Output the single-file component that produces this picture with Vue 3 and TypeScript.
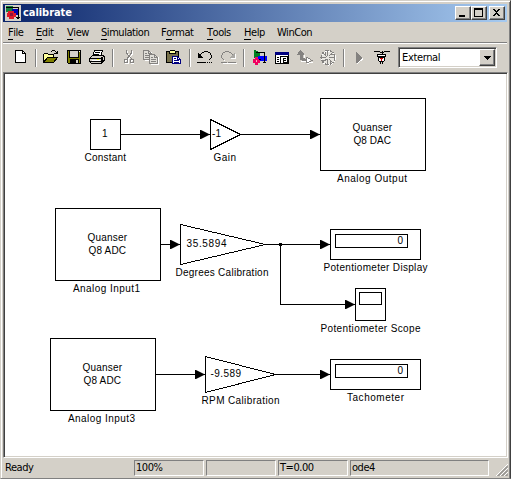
<script setup lang="ts">
interface MenuItem { key: string; rest: string; width: number; pre?: string }
interface Label { text: string; x: number; y: number; w: number }

const menus: MenuItem[] = [
  { key: 'F', rest: 'ile', width: 28 },
  { key: 'E', rest: 'dit', width: 31 },
  { key: 'V', rest: 'iew', width: 34 },
  { key: 'S', rest: 'imulation', width: 60 },
  { pre: 'F', key: 'o', rest: 'rmat', width: 46 },
  { key: 'T', rest: 'ools', width: 37 },
  { key: 'H', rest: 'elp', width: 33 },
  { pre: 'WinCon', key: '', rest: '', width: 40 },
]

const labels: Label[] = [
  { text: 'Constant', x: 84.5, y: 161, w: 41.5 },
  { text: 'Gain', x: 213.5, y: 161, w: 22.5 },
  { text: 'Quanser', x: 352.5, y: 131, w: 39.5 },
  { text: 'Q8 DAC', x: 353.5, y: 144, w: 37.5 },
  { text: 'Analog Output', x: 337, y: 182, w: 70 },
  { text: 'Quanser', x: 87.5, y: 241, w: 39.5 },
  { text: 'Q8 ADC', x: 88.5, y: 254, w: 37.5 },
  { text: 'Analog Input1', x: 73, y: 292, w: 67 },
  { text: '35.5894', x: 186.5, y: 247, w: 40 },
  { text: 'Degrees Calibration', x: 175.5, y: 276, w: 93 },
  { text: 'Potentiometer Display', x: 323.5, y: 271, w: 104 },
  { text: 'Potentiometer Scope', x: 320.5, y: 332, w: 100 },
  { text: 'Quanser', x: 82.5, y: 371, w: 39.5 },
  { text: 'Q8 ADC', x: 83.5, y: 384, w: 37.5 },
  { text: 'Analog Input3', x: 68, y: 422, w: 67 },
  { text: '-9.589', x: 210.5, y: 377, w: 30.5 },
  { text: 'RPM Calibration', x: 201.5, y: 404, w: 78 },
  { text: 'Tachometer', x: 347, y: 401, w: 57 },
]

const blocks = [
  [90, 119, 30, 30], [320, 98, 105, 72], [55, 208, 105, 72], [50, 338, 105, 72],
  [330, 229, 90, 30], [335, 234, 72, 13], [355, 288, 30, 32], [359, 292, 22, 12],
  [330, 359, 90, 30], [335, 364, 72, 13],
]

const wires = ['M120 134H202', 'M240 134H312', 'M160 244H172', 'M265 244H322', 'M280 244V304H347', 'M155 374H197', 'M275 374H322']
const arrows = [[210, 134], [320, 134], [180, 244], [330, 244], [355, 304], [205, 374], [330, 374]]
</script>

<template>
  <div class="window">
    <header class="title">
      <svg class="logo" width="16" height="16" shape-rendering="crispEdges">
        <rect width="16" height="16" fill="#d4d0c8" />
        <path d="M1 1H8V7H1z" fill="#16803c" /><path d="M7 4H14V10H7z" fill="#0000b0" />
        <path d="M3 6H9V8H11V12H9V14H4V12H2V8H3z" fill="#e01828" />
        <path d="M5 8H8V11H5z" fill="#901038" />
        <path d="M1 2.500H13.500V13M11 12.500H15M12 13.500H14" fill="none" stroke="#000" />
      </svg>
      <h1>calibrate</h1>
      <div class="buttons">
        <button aria-label="Minimize"><svg width="14" height="12" shape-rendering="crispEdges"><path d="M3 8H9V10H3z" /></svg></button>
        <button aria-label="Maximize"><svg width="14" height="12" shape-rendering="crispEdges"><path d="M2 1H11V10H2zM3 3V9H10V3z" fill-rule="evenodd" /></svg></button>
        <button class="close" aria-label="Close"><svg width="14" height="12" shape-rendering="crispEdges"><path d="M3 2H5V3H6V4H7V3H8V2H10V3H9V4H8V5H7V6H8V7H9V8H10V9H8V8H7V7H6V8H5V9H3V8H4V7H5V6H6V5H5V4H4V3H3z" /></svg></button>
      </div>
    </header>

    <nav class="menu">
      <span v-for="m in menus" :key="m.key + m.rest" :style="{ width: m.width + 'px' }">{{ m.pre }}<u v-if="m.key">{{ m.key }}</u>{{ m.rest }}</span>
    </nav>

    <div class="toolbar">
      <svg class="icon" viewBox="0 0 18 18">
        <path d="M3.500 1.500H10.500L13.500 4.500V13.500H3.500z" fill="#fff" stroke="#000" /><path d="M10.500 1.500V4.500H13.500" fill="none" stroke="#000" />
      </svg>
      <i class="sep" />
      <svg class="icon" viewBox="0 0 18 18">
        <path d="M1.500 13.500V5.500L3 4.500H5.500L6.500 5.500H11.500V8.500" fill="#ffff9c" stroke="#000" />
        <path d="M1.500 13.500L5.500 8.500H15.500L11.500 13.500z" fill="#808000" stroke="#000" />
        <path d="M9 2.500H10M10 1.500H13M13 2.500H14M14 3.500H15M12 4.500H16M15.500 2V5" fill="none" stroke="#000" />
      </svg>
      <svg class="icon" viewBox="0 0 18 18">
        <path d="M1.500 1.500H14.500V14.500H2.500L1.500 13.500z" fill="#808000" stroke="#000" />
        <path d="M4 2H12V8H4z" fill="#d4d0c8" /><path d="M3.500 2V8.500H12.500V2" fill="none" stroke="#000" />
        <path d="M4 10H13V15H4z" /><path d="M10 11H12V14H10z" fill="#d4d0c8" /><path d="M13 2H14V3H13z" fill="#fff" />
      </svg>
      <svg class="icon" viewBox="0 0 18 18">
        <path d="M6.500 1.500H14.500L12.500 7.500H4.500z" fill="#fff" stroke="#000" /><path d="M7 3.500H12M6 5.500H11" stroke="#000" />
        <path d="M1.500 9.500L4.500 6.500H15.500L16.500 8.500V11.500L13.500 14.500H3.500L1.500 12.500z" fill="#d4d0c8" stroke="#000" />
        <path d="M2 9.500H13L16 7M2 12.500H13.500V9.500M13 14L16 11M14.500 8V13" fill="none" stroke="#000" /><path d="M9 10H11V11H9z" fill="#ffff00" /><path d="M4 11H12V12H4z" fill="#fff" />
      </svg>
      <i class="sep" />
      <svg class="icon" viewBox="0 0 18 18">
        <g fill="none"><path d="M7.500 2V5L10.500 9M12.500 2V5L9.500 9M10 8L8 11M10 8L13 11M5.500 11.500H8.500V14.500H5.500zM11.500 11.500H13.500V14.500H11.500z" stroke="#fff" />
        <path d="M6.500 1V4L9.500 8M11.500 1V4L8.500 8M9 7L7 10M9 7L12 10M4.500 10.500H7.500V13.500H4.500zM10.500 10.500H13.500V13.500H10.500z" stroke="#848280" /></g>
      </svg>
      <svg class="icon" viewBox="0 0 18 18">
        <path d="M2.500 11.500H8M9 3V5M8.500 15.500H16.500V8" stroke="#fff" fill="none" />
        <path d="M1.500 1.500H6.500L9.500 4.500V10.500H1.500z" fill="#e0ded8" stroke="#848280" /><path d="M3 4.500H5M3 6.500H7M3 8.500H7M6.500 2V4.500H9" fill="none" stroke="#848280" />
        <path d="M7.500 5.500H12.500L15.500 8.500V14.500H7.500z" fill="#e0ded8" stroke="#848280" /><path d="M9 8.500H11M9 10.500H14M9 12.500H14M12.500 6V8.500H15" fill="none" stroke="#848280" />
      </svg>
      <svg class="icon" viewBox="0 0 18 18">
        <path d="M1.500 2.500H13.500V13.500H1.500z" fill="#77704a" stroke="#000" /><path d="M4.500 4.500V2.500L6 1.500H9L10.500 2.500V4.500z" fill="#ffff9c" stroke="#000" />
        <path d="M7.500 7.500H12.500L15.500 10.500V14.500H7.500z" fill="#fff" stroke="#000080" /><path d="M9 9.500H11M9 11.500H14M9 13.500H14M12.500 8V10.500H15" fill="none" stroke="#000080" />
      </svg>
      <i class="sep" />
      <svg class="icon" viewBox="0 0 18 18">
        <path d="M2 4H3V5H4V6H5V7H6V8H7V9H2z" /><path d="M4 5.500H5M5 4.500H6M6 3.500H8M8 2.500H12M12 3.500H14M14.500 4V6M15.500 6V9M14.500 9V10M13.500 10V11M1 13.500H10M11 13.500H12M13 13.500H14M15 13.500H16" fill="none" stroke="#000" />
      </svg>
      <svg class="icon" viewBox="0 0 18 18">
        <g transform="translate(1 1)"><path d="M15 4H14V5H13V6H12V7H11V8H10V9H15z" fill="#fff" /><path d="M2 13.500H16M3.500 10V11" stroke="#fff" /></g>
        <path d="M15 4H14V5H13V6H12V7H11V8H10V9H15z" fill="#aaa8a4" /><path d="M13 5.500H12M12 4.500H11M11 3.500H9M9 2.500H5M5 3.500H3M2.500 4V6M1.500 6V9M2.500 9V10M3.500 10V11M1 13.500H7M8 13.500H16" fill="none" stroke="#848280" />
      </svg>
      <i class="sep" />
      <svg class="icon" viewBox="0 0 18 18">
        <path d="M2 1H4V2H6V3H8V8L2 9z" fill="#008020" /><path d="M6 7H15V12H6z" fill="#0000ff" />
        <path d="M3 8H6V10H8V14H6V16H3V14H1V10H3z" fill="#f00060" /><path d="M4 11H5V13H4z" fill="#ffb0c0" />
        <path d="M4 3.500H12.500V14M11 13.500H14M7 10.500H9" fill="none" stroke="#000" />
      </svg>
      <svg class="icon" viewBox="0 0 18 18">
        <path d="M1.500 3.500H14.500V14.500H1.500z" fill="#fff" stroke="#000" /><path d="M1 3H15V6H1z" fill="#000080" />
        <path d="M3 8.500H5M3 10.500H5M3 12.500H5M6.500 7V14M7 7.500H13.500V13.500H9.500V9.500H12M9 11.500H12" fill="none" stroke="#000" />
      </svg>
      <svg class="icon" viewBox="0 0 18 18">
        <path d="M7 6.500H8M7.500 7V9M4 12.500H9M10 14.500H12M12 13.500H16" stroke="#fff" fill="none" />
        <path d="M3 1H4V2H5V3H6V4H7V6H6V9H8V10H9V12H5V11H3V6H0V5H1V3H2V2H3z" fill="#848280" />
        <path d="M9.500 8V14M10 8.500H11M11 9.500H13M13 10.500H14M14 11.500H16M12 12.500H14M10 13.500H12" fill="none" stroke="#848280" /><path d="M10 9H11V10H13V12H12V13H10z" fill="#fff" />
      </svg>
      <svg class="icon" viewBox="0 0 18 18">
        <circle cx="9.500" cy="9" r="7" fill="#e8e6e0" stroke="#fff" /><circle cx="9" cy="8.500" r="7" fill="none" stroke="#848280" stroke-dasharray="4 1" />
        <path d="M8.500 2V7M8.500 10V15M2 8.500H7M10 8.500H15M4 4L8 8M13 4L10 7M8 10L4 13M10 10L13 13M6.500 3V6M11.500 11V14M3 11.500H6M12 5.500H15" fill="none" stroke="#848280" />
      </svg>
      <i class="sep" />
      <svg class="icon" viewBox="0 0 18 18"><path d="M4 15L10 9.500" stroke="#fff" /><path d="M3 3H4V4H5V5H6V6H7V7H8V8H9V10H8V11H7V12H6V13H5V14H3z" fill="#848280" /></svg>
      <svg class="icon" viewBox="0 0 18 18">
        <path d="M1 2.500H7M11 2.500H17M7 3.500H11M9 2V5" stroke="#000" fill="none" /><path d="M4.500 5.500H12.500V7.500H4.500z" fill="#fff" stroke="#000" />
        <path d="M5.500 8.500H11.500V11.500L10.500 12.500H6.500L5.500 11.500z" fill="#fff" stroke="#000" /><path d="M7 9H10V10H9V12H8V10H7z" fill="#d00000" /><path d="M7.500 13V15M9.500 13V15" stroke="#000" />
      </svg>
      <div class="combo">
        <span>External</span>
        <b class="drop"><svg width="11" height="12" shape-rendering="crispEdges"><path d="M2 4H9V5H8V6H7V7H6V8H5V7H4V6H3V5H2z" /></svg></b>
      </div>
    </div>

    <main class="canvas">
      <svg class="diagram" viewBox="5 74 501 382">
        <g transform="translate(.5 .5)" fill="none" stroke="#000" shape-rendering="crispEdges">
          <path v-for="w in wires" :key="w" :d="w" />
          <path d="M210 119L240 134L210 149z" fill="#fff" />
          <path d="M180 224L265 244L180 264z" fill="#fff" />
          <path d="M205 356L275 374L205 392z" fill="#fff" />
          <rect v-for="(b, i) in blocks" :key="i" :x="b[0]" :y="b[1]" :width="b[2]" :height="b[3]" fill="#fff" />
        </g>
        <rect x="279" y="243" width="3" height="3" />
        <path v-for="(a, i) in arrows" :key="i" :d="`M${a[0] - 10} ${a[1] - 4}h1l8 4h1v1h-1l-8 4h-1z`" />
        <g class="labels">
          <text v-for="(l, i) in labels" :key="i" :x="l.x" :y="l.y" :textLength="l.w">{{ l.text }}</text>
          <text x="102" y="137">1</text>
          <text x="212" y="137" textLength="9">-1</text>
          <text x="397.500" y="243.500">0</text>
          <text x="397.500" y="373.500">0</text>
        </g>
      </svg>
    </main>

    <footer class="status">
      <span class="ready">Ready</span>
      <span class="panel">100%</span>
      <span class="panel" />
      <span class="panel">T=0.00</span>
      <span class="panel solver">ode4</span>
      <svg class="grip" width="13" height="13">
        <path d="M1 13L13 1M5 13L13 5M9 13L13 9" stroke="#fff" />
        <path d="M2.500 13L13 2.500M3.500 13L13 3.500M6.500 13L13 6.500M7.500 13L13 7.500M10.500 13L13 10.500M11.500 13L13 11.500" stroke="#848280" />
      </svg>
    </footer>
  </div>
</template>

<style>
body { overflow: hidden; }
</style>

<style scoped>
* { box-sizing: border-box; }
.window {
  width: 511px; height: 479px; display: flex; flex-direction: column;
  background: #d4d0c8; padding: 2px 1px 0 2px;
  border: solid; border-width: 1px; border-color: #d4d0c8 #404040 #808080 #d4d0c8;
  box-shadow: inset 1px 1px #fff, inset -1px 0 #808080;
  font: 11px/14px "DejaVu Sans Condensed", "DejaVu Sans", sans-serif; font-stretch: condensed;
  letter-spacing: -.45px; color: #000;
}
.title {
  height: 18px; margin: 1px 2px 0 0; padding: 0 2px; display: flex; align-items: center;
  background: linear-gradient(90deg, #0a246a, #a6caf0); flex: none;
}
.logo { flex: none; }
h1 { margin: 0 0 0 2px; font-size: 11px; line-height: 16px; color: #fff; letter-spacing: -.05px; flex: 1; }
.buttons { display: flex; }
button, .drop {
  padding: 0; border: 1px solid; border-color: #fff #404040 #404040 #fff;
  box-shadow: inset -1px -1px #808080; background: #d4d0c8;
}
button { width: 16px; height: 14px; }
button svg { display: block; }
.close { margin-left: 2px; }
.menu { height: 20px; display: flex; padding: 4px 0 0 5px; white-space: nowrap; flex: none; }
.menu span { flex: none; }
u { text-decoration: none; box-shadow: inset 0 -1px #000; display: inline-block; height: 14px; }
.toolbar {
  height: 30px; flex: none; display: grid; align-items: start;
  grid-template-columns: 22px 8px 24px 22px 23px 9px 22px 23px 23px 8px 24px 22px 10px 22px 23px 22px 23px 11px 20px 25px 99px;
  padding: 5px 0 0 9px; margin-right: 2px;
  border-top: 1px solid #808080; box-shadow: inset 0 1px #fff;
}
.icon { width: 18px; height: 18px; display: block; margin-top: 1px; shape-rendering: crispEdges; }
.sep { width: 2px; height: 18px; margin: 1px 0 0 1px; border-left: 1px solid #808080; border-right: 1px solid #fff; }
.combo {
  height: 21px; width: 99px; display: flex; justify-content: space-between; background: #fff;
  border: 1px solid; border-color: #808080 #fff #fff #808080; box-shadow: inset 1px 1px #404040, inset -1px -1px #d4d0c8;
  padding: 1px; margin-top: -1px;
}
.combo span { padding: 2px 0 0 2px; letter-spacing: -.35px; }
.drop { width: 16px; height: 17px; display: grid; place-items: center; }
.canvas {
  flex: none; width: 505px; height: 386px; background: #fff; padding: 1px;
  border: 1px solid; border-color: #808080 #fff #fff #808080; box-shadow: inset 1px 1px #404040, inset -1px -1px #d4d0c8;
}
.diagram { display: block; width: 501px; height: 382px; }
.labels { font: 10px "Liberation Sans", Arial, sans-serif; letter-spacing: 0; }
.status { flex: 1; display: flex; padding: 2px 0 0 2px; gap: 2px; }
.status span { line-height: 14px; }
.ready { width: 127px; padding-top: 1px; }
.panel { width: 70px; height: 16px; padding-left: 1px; border: 1px solid; border-color: #808080 #fff #fff #808080; }
.solver { width: 139px; }
.grip { margin: 3px 0 0 4px; }
</style>
